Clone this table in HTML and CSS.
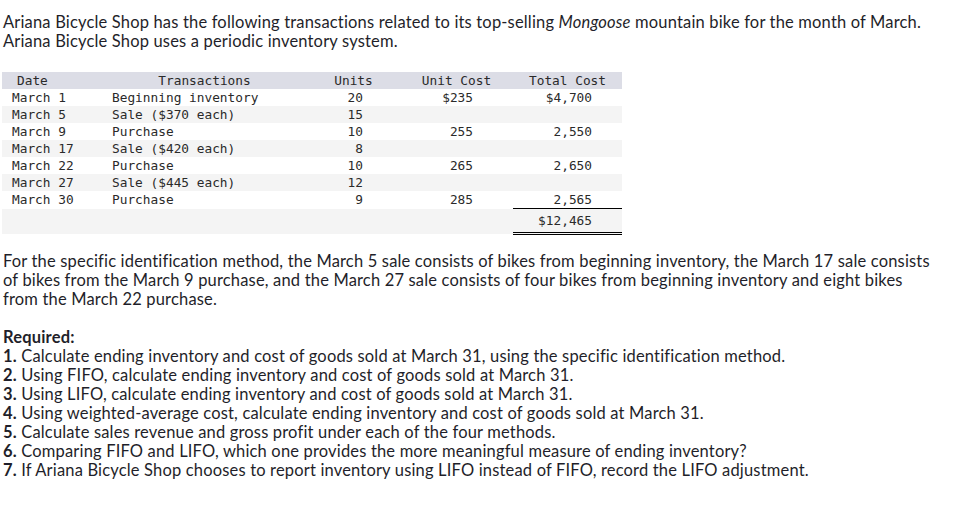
FILE: index.html
```html
<!DOCTYPE html>
<html>
<head>
<meta charset="utf-8">
<link rel="stylesheet" href="styles.css">
</head>
<body>
<div class="page">
  <p class="intro">Ariana Bicycle Shop has the following transactions related to its top-selling <i>Mongoose</i> mountain bike for the month of March.<br>Ariana Bicycle Shop uses a periodic inventory system.</p>

  <table class="ledger">
    <thead>
      <tr>
        <th class="c-date">Date</th>
        <th class="c-tx">Transactions</th>
        <th class="c-units">Units</th>
        <th class="c-uc">Unit Cost</th>
        <th class="c-tc">Total Cost</th>
      </tr>
    </thead>
    <tbody>
      <tr><td class="c-date">March 1</td><td class="c-tx">Beginning inventory</td><td class="c-units">20</td><td class="c-uc">$235</td><td class="c-tc">$4,700</td></tr>
      <tr class="alt"><td class="c-date">March 5</td><td class="c-tx">Sale ($370 each)</td><td class="c-units">15</td><td class="c-uc"></td><td class="c-tc"></td></tr>
      <tr><td class="c-date">March 9</td><td class="c-tx">Purchase</td><td class="c-units">10</td><td class="c-uc">255</td><td class="c-tc">2,550</td></tr>
      <tr class="alt"><td class="c-date">March 17</td><td class="c-tx">Sale ($420 each)</td><td class="c-units">8</td><td class="c-uc"></td><td class="c-tc"></td></tr>
      <tr><td class="c-date">March 22</td><td class="c-tx">Purchase</td><td class="c-units">10</td><td class="c-uc">265</td><td class="c-tc">2,650</td></tr>
      <tr class="alt"><td class="c-date">March 27</td><td class="c-tx">Sale ($445 each)</td><td class="c-units">12</td><td class="c-uc"></td><td class="c-tc"></td></tr>
      <tr><td class="c-date">March 30</td><td class="c-tx">Purchase</td><td class="c-units">9</td><td class="c-uc">285</td><td class="c-tc">2,565</td></tr>
      <tr class="alt total"><td class="c-date"></td><td class="c-tx"></td><td class="c-units"></td><td class="c-uc"></td><td class="c-tc sum">$12,465</td></tr>
    </tbody>
  </table>

  <p class="para">For the specific identification method, the March 5 sale consists of bikes from beginning inventory, the March 17 sale consists<br>of bikes from the March 9 purchase, and the March 27 sale consists of four bikes from beginning inventory and eight bikes<br>from the March 22 purchase.</p>

  <div class="req">
    <div class="req-title">Required:</div>
    <div><b>1.</b> Calculate ending inventory and cost of goods sold at March 31, using the specific identification method.</div>
    <div><b>2.</b> Using FIFO, calculate ending inventory and cost of goods sold at March 31.</div>
    <div><b>3.</b> Using LIFO, calculate ending inventory and cost of goods sold at March 31.</div>
    <div><b>4.</b> Using weighted-average cost, calculate ending inventory and cost of goods sold at March 31.</div>
    <div><b>5.</b> Calculate sales revenue and gross profit under each of the four methods.</div>
    <div><b>6.</b> Comparing FIFO and LIFO, which one provides the more meaningful measure of ending inventory?</div>
    <div><b>7.</b> If Ariana Bicycle Shop chooses to report inventory using LIFO instead of FIFO, record the LIFO adjustment.</div>
  </div>
</div>
</body>
</html>
```
FILE: styles.css
```css
html, body {
  margin: 0;
  padding: 0;
  background: #ffffff;
}
.page {
  padding: 13px 0 0 3px;
  font-family: "Lato", "Liberation Sans", sans-serif;
  font-size: 16.5px;
  letter-spacing: 0.17px;
  font-variant-ligatures: none;
  line-height: 19px;
  color: #1f1f2a;
}
.intro {
  margin: 0;
}
.para {
  margin: 17px 0 0 0;
}
.req {
  margin-top: 19px;
}
.req-title {
  font-weight: bold;
}
.ledger {
  margin: 21px 0 0 -1px;
  border-collapse: collapse;
  font-family: "DejaVu Sans Mono", "Liberation Mono", monospace;
  font-size: 12.8px;
  letter-spacing: 0;
  line-height: 17px;
  color: #2a2a2a;
}
.ledger th {
  background: #dcdde6;
  font-weight: normal;
  height: 17px;
  padding: 0;
  text-align: center;
}
.ledger td {
  height: 17px;
  padding: 0;
  white-space: nowrap;
}
.ledger tr.alt td {
  background: #f4f4f4;
}
.c-date { width: 100px; }
.c-tx { width: 205px; }
.c-units { width: 93px; }
.c-uc { width: 113px; }
.c-tc { width: 109px; }
.ledger th.c-date { text-align: left; padding-left: 15px; width: 85px; }
.ledger td.c-date { padding-left: 10px; width: 90px; }
.ledger td.c-tx { padding-left: 10px; width: 195px; }
.ledger td.c-units { text-align: right; padding-right: 37px; width: 56px; }
.ledger td.c-uc { text-align: right; padding-right: 40px; width: 73px; }
.ledger td.c-tc { text-align: right; padding-right: 30px; width: 79px; }
.ledger tr:nth-child(7) td.c-tc { border-bottom: 1px solid #000; }
.ledger tr.total td { height: 23px; }
.ledger td.sum { border-bottom: 3px double #000; }
```
